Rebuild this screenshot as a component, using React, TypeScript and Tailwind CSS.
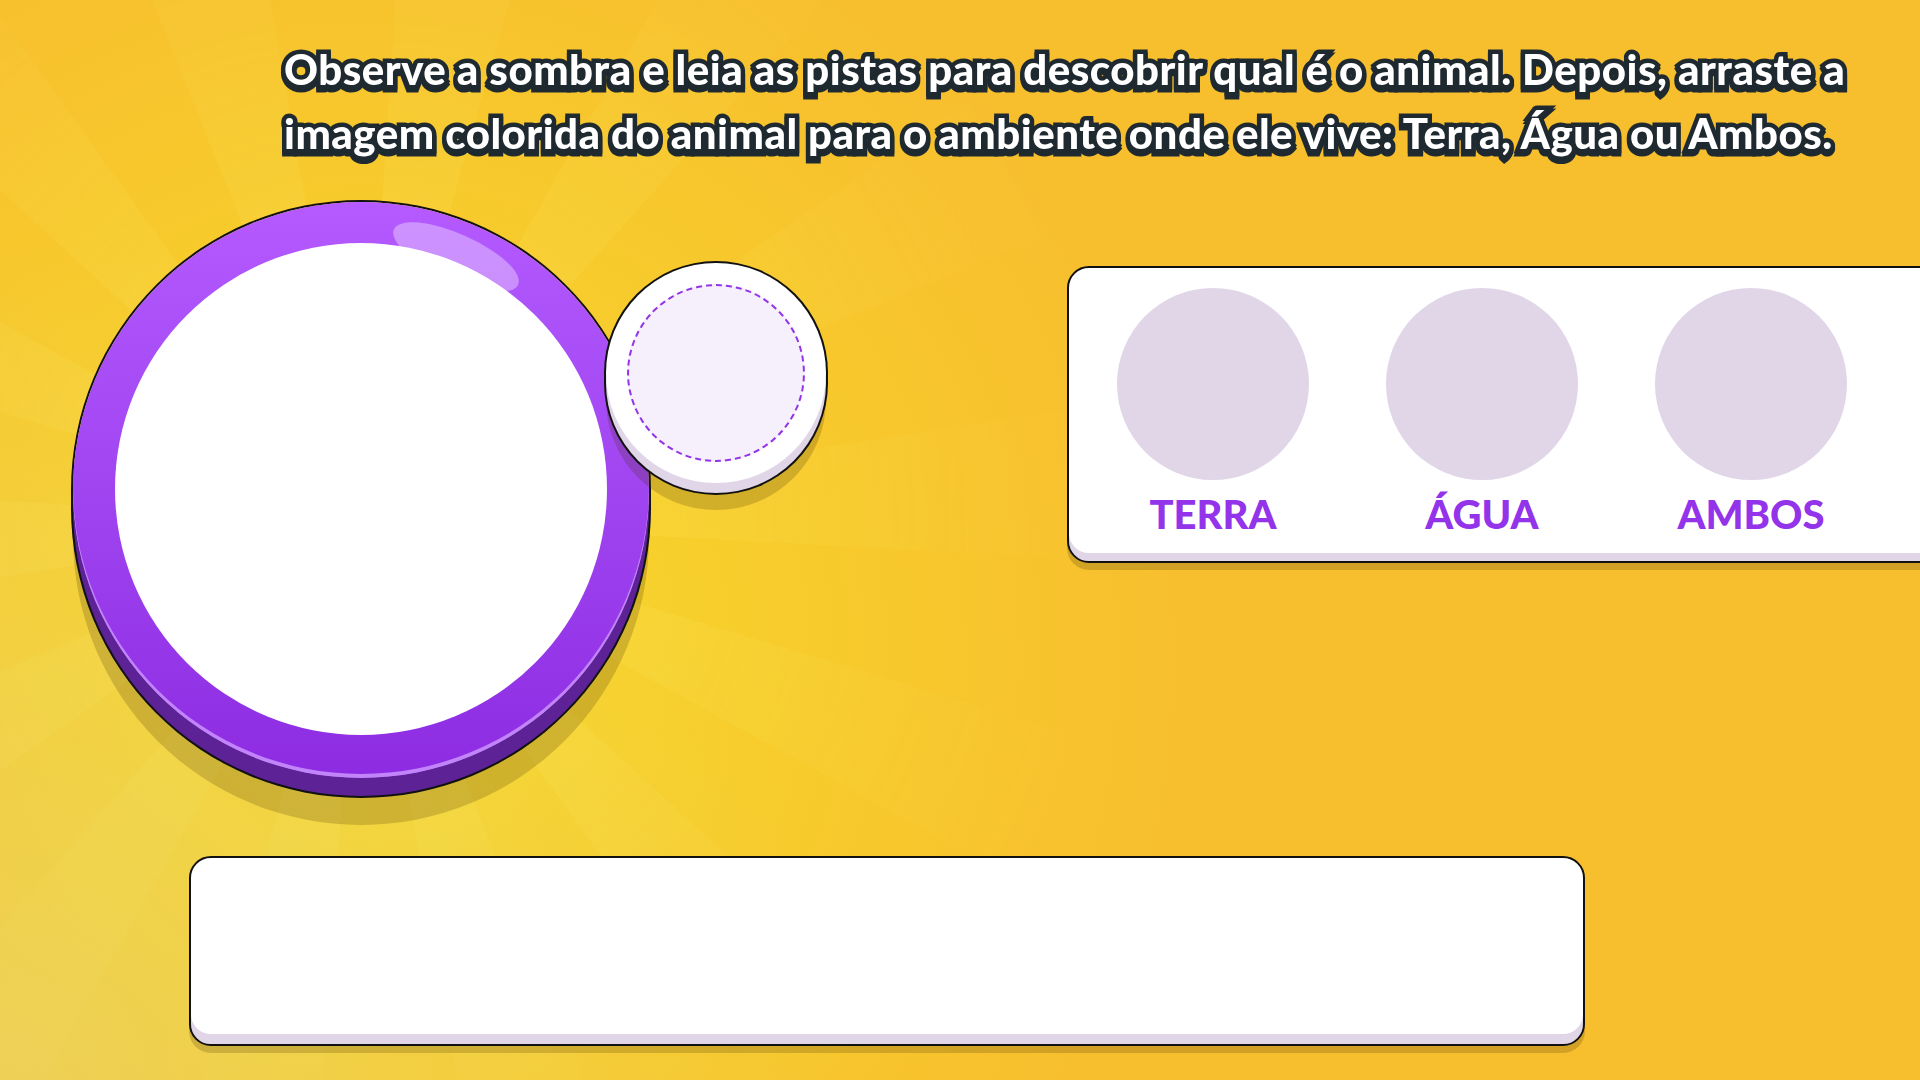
import React from "react";

const zones = ["TERRA", "ÁGUA", "AMBOS"];

export default function App() {
  return (
    <div className="relative h-screen w-full overflow-hidden bg-[radial-gradient(circle_at_380px_660px,#f7d92a_0%,#f7cc2c_24%,#f7bf2e_48%)] font-['Lato',sans-serif]">
      {/* sun rays */}
      <div
        aria-hidden
        className="pointer-events-none absolute inset-0 bg-[repeating-conic-gradient(from_4deg_at_361px_520px,rgba(255,245,120,0.13)_0deg_12deg,rgba(255,255,255,0)_12deg_25.7deg)] [mask-image:radial-gradient(circle_at_361px_520px,black_15%,transparent_48%)]"
      />
      {/* pale corner */}
      <div
        aria-hidden
        className="pointer-events-none absolute inset-0 bg-[radial-gradient(circle_at_0px_1080px,rgba(230,215,120,0.55)_0%,rgba(230,215,120,0)_38%)]"
      />

      <div className="relative flex flex-col">
        <p className="pl-[284px] pt-[37px] text-[42px] font-black leading-[64px] tracking-[0.5px] text-white [-webkit-text-stroke:9px_#1f2930] [paint-order:stroke_fill] [filter:drop-shadow(0_3px_0_#1f2930)]">
          Observe a sombra e leia as pistas para descobrir qual é o animal. Depois, arraste a
          <br />
          imagem colorida do animal para o ambiente onde ele vive: Terra, Água ou Ambos.
        </p>

        <div className="mt-[37px] flex items-start">
          {/* big viewer */}
          <div className="relative ml-[73px] h-[576px] w-[576px] shrink-0 rounded-full bg-gradient-to-b from-[#b45aff] to-[#8d2be2] shadow-[inset_0_-4px_0_#c184fb,0_18px_0_0_#5c2296,0_0_0_2px_#111,0_18px_0_2px_#111,0_47px_0_0_rgba(60,40,0,0.2)]">
            <div className="absolute left-[315px] top-[32px] h-[46px] w-[136px] rotate-[24deg] rounded-[50%] bg-white/35" />
            <div className="absolute left-[42px] top-[41px] h-[492px] w-[492px] rounded-full bg-white" />
          </div>

          {/* drop slot */}
          <div className="relative z-10 -ml-[43px] mt-[61px] flex h-[220px] w-[220px] shrink-0 items-center justify-center rounded-full bg-white shadow-[0_10px_0_0_#e0d6e8,0_0_0_2px_#111,0_10px_0_2px_#111,0_27px_0_0_rgba(60,40,0,0.2)]">
            <div className="h-[178px] w-[178px] rounded-full border-2 border-dashed border-[#9333ea] bg-[#f5f0fb]" />
          </div>

          {/* habitats */}
          <div className="ml-[241px] mt-[64px] h-[297px] w-[900px] shrink-0 rounded-[22px] border-2 border-[#111] bg-white pl-[48px] pt-[20px] shadow-[inset_0_-8px_0_#e0d6e8,0_7px_0_rgba(60,40,0,0.2)]">
            <div className="flex gap-[77px]">
              {zones.map((z) => (
                <div key={z} className="flex w-[192px] flex-col items-center">
                  <div className="h-[192px] w-[192px] rounded-full bg-[#e0d6e8]" />
                  <span className="mt-[14px] text-[40px] font-black leading-[40px] text-[#9333ea]">
                    {z}
                  </span>
                </div>
              ))}
            </div>
          </div>
        </div>

        {/* clue box */}
        <div className="ml-[189px] mt-[78px] h-[190px] w-[1396px] rounded-[22px] border-2 border-[#111] bg-white shadow-[inset_0_-10px_0_#e0d6e8,0_7px_0_rgba(60,40,0,0.2)]" />
      </div>
    </div>
  );
}
